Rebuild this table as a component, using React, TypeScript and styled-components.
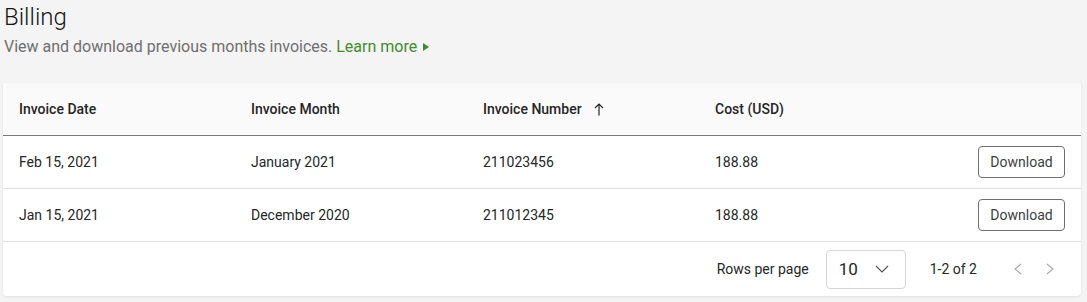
import styled, { createGlobalStyle } from "styled-components";

const GlobalStyle = createGlobalStyle`
  body {
    margin: 0;
    background: #f4f4f4;
    font-family: Roboto, "Liberation Sans", sans-serif;
    color: #161616;
  }
`;

const Page = styled.div`
  padding: 0 6px 7px 3px;
`;

const Title = styled.h1`
  margin: 0;
  padding: 2px 0 0 1px;
  font-size: 24px;
  font-weight: 300;
  line-height: 30px;
  color: #161616;
`;

const Subtitle = styled.p`
  margin: 4px 0 0 1px;
  font-size: 16px;
  line-height: 22px;
  color: #6f6f6f;
`;

const LearnMore = styled.a`
  color: #3e8e2a;
  text-decoration: none;
  display: inline-flex;
  align-items: center;
  gap: 6px;
`;

const Card = styled.div`
  margin-top: 25px;
  background: #ffffff;
  border-radius: 0 0 4px 4px;
  box-shadow: 0 1px 3px rgba(0, 0, 0, 0.08);
  overflow: hidden;
`;

const Row = styled.div<{ $head?: boolean }>`
  display: grid;
  grid-template-columns: 232px 232px 232px 1fr auto;
  align-items: center;
  height: 52px;
  padding: 0 16px;
  background: ${(p) => (p.$head ? "#fafafa" : "#ffffff")};
  border-bottom: 1px solid ${(p) => (p.$head ? "#7a7a7a" : "#e0e0e0")};
  font-size: 14px;
  font-weight: ${(p) => (p.$head ? 500 : 400)};
  color: #262626;
`;

const HeadCell = styled.div`
  display: flex;
  align-items: center;
  gap: 12px;
`;

const DownloadButton = styled.button`
  width: 87px;
  height: 32px;
  border: 1px solid #6f6f6f;
  border-radius: 4px;
  background: #ffffff;
  font-family: inherit;
  font-size: 14px;
  color: #3d3d3d;
  cursor: pointer;
`;

const Footer = styled.div`
  display: flex;
  align-items: center;
  justify-content: flex-end;
  height: 54px;
  padding: 0 27px 0 16px;
  font-size: 14px;
  color: #262626;
`;

const Select = styled.div`
  display: flex;
  align-items: center;
  justify-content: space-between;
  box-sizing: border-box;
  width: 80px;
  height: 39px;
  margin: 0 24px 0 17px;
  padding: 0 16px 0 12px;
  border: 1px solid #d6d6d6;
  border-radius: 4px;
  font-size: 17px;
`;

const Pager = styled.div`
  display: flex;
  align-items: center;
  gap: 24px;
  margin-left: 37px;
`;

const ArrowUp = () => (
  <svg width="10" height="13" viewBox="0 0 10 13" fill="none" stroke="#262626" strokeWidth="1.2">
    <path d="M5 12.5V1M1 5l4-4 4 4" />
  </svg>
);

const Chevron = ({ dir }: { dir: "down" | "left" | "right" }) => {
  const d = dir === "down" ? "M1 1l6 6 6-6" : dir === "left" ? "M7 1L1 6l6 5" : "M1 1l6 5-6 5";
  const w = dir === "down" ? 14 : 8;
  const h = dir === "down" ? 8 : 12;
  return (
    <svg width={w} height={h} viewBox={`0 0 ${w} ${h}`} fill="none" stroke={dir === "down" ? "#525252" : "#a8a8a8"} strokeWidth="1.1">
      <path d={d} />
    </svg>
  );
};

const invoices = [
  { date: "Feb 15, 2021", month: "January 2021", number: "211023456", cost: "188.88" },
  { date: "Jan 15, 2021", month: "December 2020", number: "211012345", cost: "188.88" },
];

export default function App() {
  return (
    <>
      <GlobalStyle />
      <Page>
        <Title>Billing</Title>
        <Subtitle>
          View and download previous months invoices.{" "}
          <LearnMore href="#">
            Learn more
            <svg width="6" height="8" viewBox="0 0 6 8">
              <path d="M0 0l6 4-6 4z" fill="#3e8e2a" />
            </svg>
          </LearnMore>
        </Subtitle>
        <Card>
          <Row $head>
            <HeadCell>Invoice Date</HeadCell>
            <HeadCell>Invoice Month</HeadCell>
            <HeadCell>
              Invoice Number <ArrowUp />
            </HeadCell>
            <HeadCell>Cost (USD)</HeadCell>
            <div />
          </Row>
          {invoices.map((inv) => (
            <Row key={inv.number}>
              <div>{inv.date}</div>
              <div>{inv.month}</div>
              <div>{inv.number}</div>
              <div>{inv.cost}</div>
              <DownloadButton>Download</DownloadButton>
            </Row>
          ))}
          <Footer>
            <span>Rows per page</span>
            <Select>
              <span>10</span>
              <Chevron dir="down" />
            </Select>
            <span>1-2 of 2</span>
            <Pager>
              <Chevron dir="left" />
              <Chevron dir="right" />
            </Pager>
          </Footer>
        </Card>
      </Page>
    </>
  );
}
